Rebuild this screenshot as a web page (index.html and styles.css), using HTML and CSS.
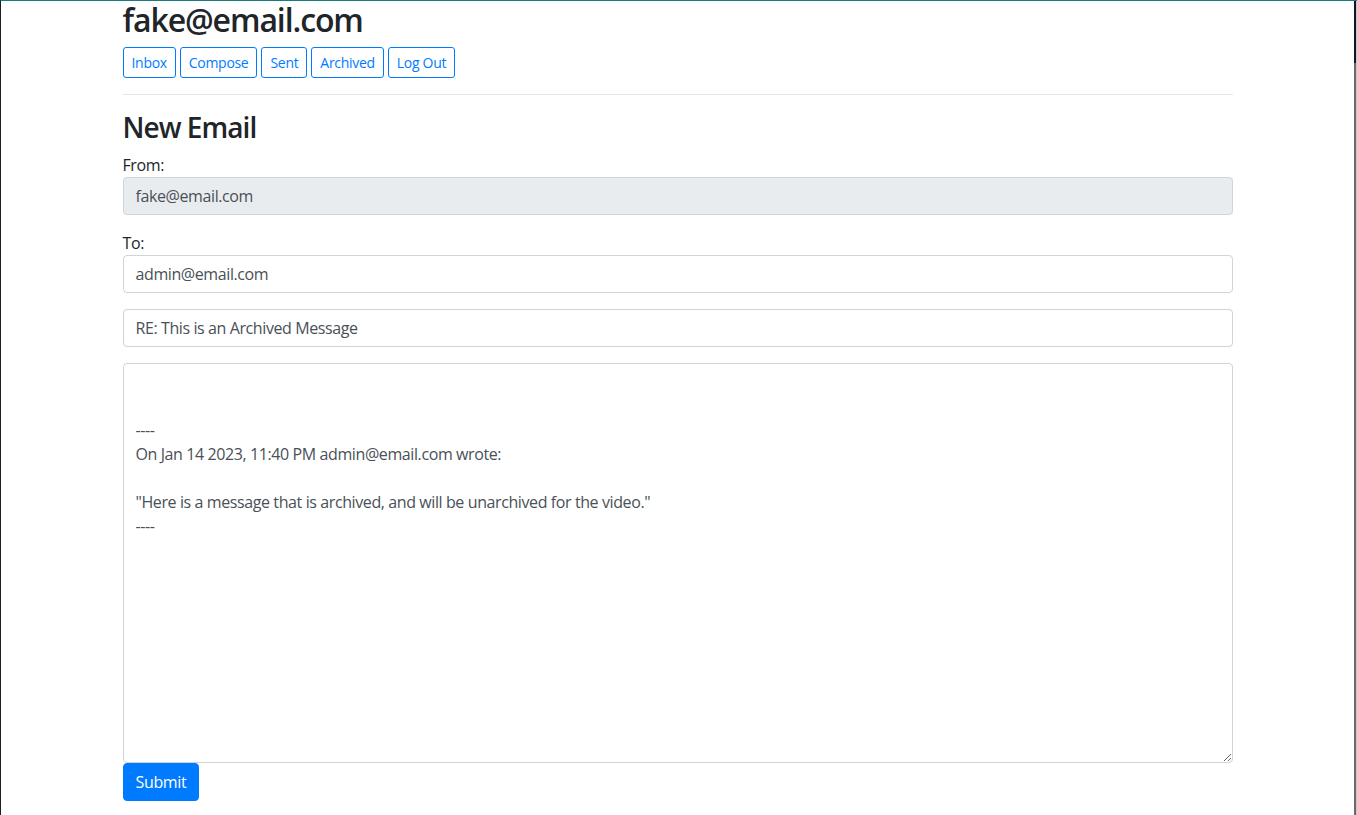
FILE: index.html
```html
<!DOCTYPE html>
<html lang="en">
<head>
<meta charset="utf-8">
<title>Mail</title>
<link rel="stylesheet" href="styles.css">
</head>
<body>
<div class="frame">
  <div class="page">
    <div class="container">
      <h2 class="user">fake@email.com</h2>
      <nav class="nav">
        <button class="btn-sm">Inbox</button>
        <button class="btn-sm">Compose</button>
        <button class="btn-sm">Sent</button>
        <button class="btn-sm">Archived</button>
        <button class="btn-sm">Log Out</button>
      </nav>
      <hr class="rule">
      <h3 class="title">New Email</h3>
      <form class="compose">
        <div class="form-group">
          <div class="label">From:</div>
          <input class="form-control" disabled value="fake@email.com">
        </div>
        <div class="form-group">
          <div class="label">To:</div>
          <input class="form-control" value="admin@email.com">
        </div>
        <div class="form-group">
          <input class="form-control" value="RE: This is an Archived Message">
        </div>
        <textarea class="form-control body-field">


----
On Jan 14 2023, 11:40 PM admin@email.com wrote:

"Here is a message that is archived, and will be unarchived for the video."
----</textarea>
        <button type="button" class="btn-primary">Submit</button>
      </form>
    </div>
  </div>
  <div class="edge"></div>
</div>
</body>
</html>
```
FILE: styles.css
```css
* { box-sizing: border-box; }
html, body { margin: 0; height: 100%; }
body {
  font-family: "Open Sans", "Noto Sans", sans-serif;
  font-size: 16px;
  line-height: 1.5;
  letter-spacing: -0.4px;
  color: #212529;
  background: #fff;
  overflow: hidden;
}
.frame {
  display: flex;
  height: 815px;
  border-top: 1px solid #1a7a82;
  border-left: 1px solid #1e1e1e;
}
.page { flex: 1; min-width: 0; }
.edge {
  width: 3px;
  background: linear-gradient(to bottom, #0b1a26 0, #0b1a26 62px, #6a6a6a 62px, #6a6a6a 100%);
  border-right: 1px solid #c8c8c8;
}
.container {
  max-width: 1140px;
  padding: 0 15px;
  margin: 0 auto;
}
.user {
  margin: 0 0 8px;
  font-size: 32px;
  font-weight: 600;
  line-height: 1.2;
  letter-spacing: -1.1px;
}
.nav { display: flex; gap: 4px; }
.btn-sm {
  font-family: inherit;
  font-size: 14px;
  line-height: 1.5;
  letter-spacing: -0.3px;
  padding: 4px 8px;
  color: #007bff;
  background: transparent;
  border: 1px solid #007bff;
  border-radius: 3px;
}
.rule {
  margin: 16px 0;
  border: 0;
  border-top: 1px solid rgba(0,0,0,.1);
}
.title {
  margin: 0 0 8px;
  font-size: 28px;
  font-weight: 600;
  line-height: 1.2;
  letter-spacing: -0.95px;
}
.form-group { margin-bottom: 16px; }
.label { line-height: 24px; }
.form-control {
  display: block;
  width: 100%;
  height: 38px;
  padding: 6px 12px;
  font-family: inherit;
  font-size: 16px;
  line-height: 1.5;
  letter-spacing: -0.4px;
  color: #495057;
  background: #fff;
  border: 1px solid #ced4da;
  border-radius: 4px;
  margin: 0;
}
.form-control:disabled { background: #e9ecef; opacity: 1; }
.body-field { height: 400px; resize: vertical; }
.btn-primary {
  display: block;
  font-family: inherit;
  font-size: 16px;
  line-height: 1.5;
  letter-spacing: -0.35px;
  padding: 6px 12px;
  color: #fff;
  background: #007bff;
  border: 1px solid #007bff;
  border-radius: 4px;
}
```
